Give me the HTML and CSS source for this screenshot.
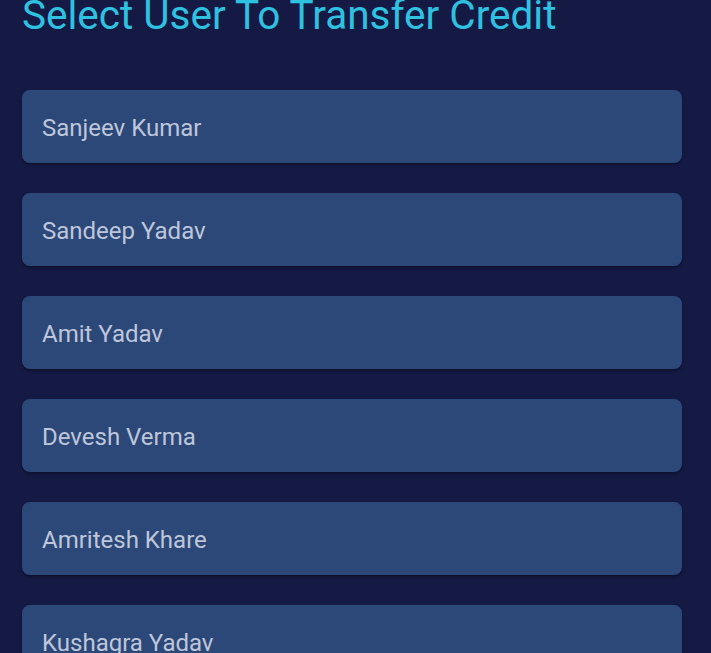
FILE: index.html
```html
<!DOCTYPE html>
<html>
<head>
<meta charset="utf-8">
<link rel="stylesheet" href="styles.css">
</head>
<body>
<div class="page">
  <h1 class="title">Select User To Transfer Credit</h1>
  <ul class="users">
    <li class="user">Sanjeev Kumar</li>
    <li class="user">Sandeep Yadav</li>
    <li class="user">Amit Yadav</li>
    <li class="user">Devesh Verma</li>
    <li class="user">Amritesh Khare</li>
    <li class="user">Kushagra Yadav</li>
  </ul>
</div>
</body>
</html>
```
FILE: styles.css
```css
html, body {
  margin: 0;
  padding: 0;
  background: #151a45;
  height: 100%;
  overflow: hidden;
}
.page {
  padding: 0 29px 0 22px;
  font-family: Roboto, "Liberation Sans", sans-serif;
}
.title {
  margin: -9px 0 0 0;
  font-size: 40.5px;
  font-weight: 400;
  line-height: 48px;
  color: #2fc2e0;
  white-space: nowrap;
}
.users {
  list-style: none;
  margin: 51px 0 0 0;
  padding: 0;
  display: flex;
  flex-direction: column;
  gap: 30px;
}
.user {
  height: 73px;
  box-sizing: border-box;
  padding: 2px 20px 0 20px;
  display: flex;
  align-items: center;
  background: #2b4879;
  border-radius: 8px;
  box-shadow: 0 2px 3px rgba(0, 0, 0, 0.35);
  color: #bfc6d9;
  font-size: 24px;
}
```
